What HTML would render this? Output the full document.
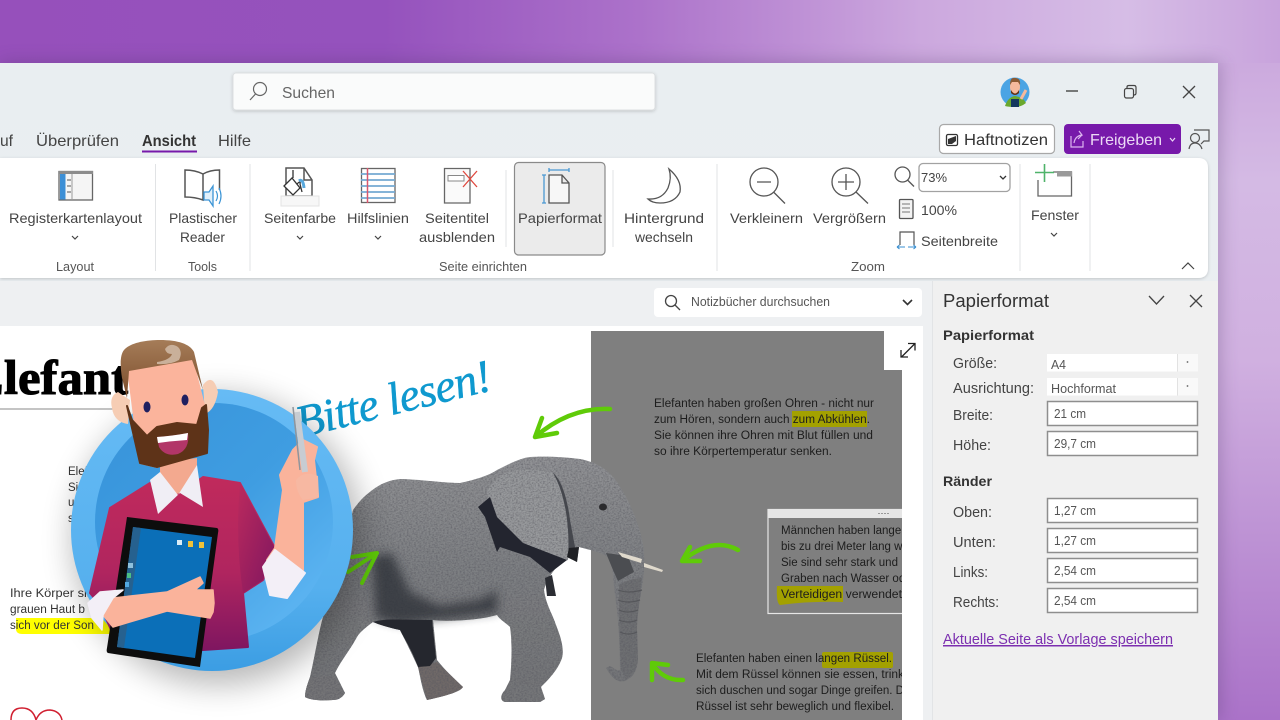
<!DOCTYPE html>
<html lang="de">
<head>
<meta charset="utf-8">
<title>OneNote Papierformat</title>
<style>
html,body{margin:0;padding:0;width:1280px;height:720px;overflow:hidden;background:#a060c0}
svg{display:block;position:absolute;left:0;top:0;overflow:hidden;filter:blur(.3px)}
text{font-family:"Liberation Sans",sans-serif;fill:#3a3a3a;white-space:pre}
.r{font-size:14px;fill:#444}
.g{font-size:12.5px;fill:#555}
.p{font-size:14.5px;fill:#444}
.f{font-size:13px;fill:#555}
.b{font-size:11.5px;fill:#333}
.d{font-size:11.5px;fill:#1d1d1d}
.ic{fill:none;stroke:#555;stroke-width:1.5}
.fld{fill:#fff;stroke:#8e8e8e;stroke-width:1.5}
.ar{fill:none;stroke:#5fcb08;stroke-width:4.5;stroke-linecap:round;stroke-linejoin:round}
</style>
</head>
<body>
<svg width="1280" height="720" viewBox="0 0 1280 720">
<defs>
<linearGradient id="bg" x1="0" y1="0" x2="1" y2="0">
<stop offset="0" stop-color="#9650bb"/><stop offset=".3" stop-color="#9552bd"/><stop offset=".5" stop-color="#ac72ca"/><stop offset=".72" stop-color="#cca8de"/><stop offset=".88" stop-color="#d6bde6"/><stop offset="1" stop-color="#c8a3dc"/>
</linearGradient>
<linearGradient id="bgr" x1="0" y1="0" x2="0" y2="1">
<stop offset="0" stop-color="#ccaade"/><stop offset=".18" stop-color="#d4bae4"/><stop offset=".45" stop-color="#d0b0e0"/><stop offset=".75" stop-color="#bb8fd3"/><stop offset="1" stop-color="#aa72c8"/>
</linearGradient>
<linearGradient id="win" x1="0" y1="0" x2="0" y2="1"><stop offset="0" stop-color="#e9eef1"/><stop offset="1" stop-color="#eceff2"/></linearGradient>
<linearGradient id="c1" x1="0" y1="0" x2="0" y2="1"><stop offset="0" stop-color="#66bbf5"/><stop offset=".7" stop-color="#56b0ee"/><stop offset="1" stop-color="#3b9de3"/></linearGradient>
<linearGradient id="c2" x1="0" y1="0" x2="1" y2="1"><stop offset="0" stop-color="#3793da"/><stop offset=".5" stop-color="#3f9de1"/><stop offset="1" stop-color="#66bcf7"/></linearGradient>
<linearGradient id="shirt" x1="0" y1="0" x2="0" y2="1"><stop offset="0" stop-color="#c02a5c"/><stop offset=".55" stop-color="#b0255f"/><stop offset="1" stop-color="#7f1660"/></linearGradient>
<linearGradient id="sleeve" x1="0" y1="0" x2="1" y2="1"><stop offset="0" stop-color="#bb2a5d"/><stop offset="1" stop-color="#7f1660"/></linearGradient>
<linearGradient id="hair" x1="0" y1="0" x2="0" y2="1"><stop offset="0" stop-color="#a57c58"/><stop offset="1" stop-color="#7a4c2a"/></linearGradient>
<linearGradient id="ele" gradientUnits="userSpaceOnUse" x1="0" y1="457" x2="0" y2="702"><stop offset="0" stop-color="#929396"/><stop offset=".45" stop-color="#7e8083"/><stop offset="1" stop-color="#737476"/></linearGradient>
<filter id="soft" x="-30%" y="-30%" width="160%" height="160%"><feGaussianBlur stdDeviation="16"/></filter>
<filter id="sm" x="-30%" y="-30%" width="160%" height="160%"><feGaussianBlur stdDeviation="5"/></filter>
<filter id="skin" x="0" y="0" width="1" height="1">
<feTurbulence type="fractalNoise" baseFrequency=".55 .7" numOctaves="2" seed="4" result="n"/>
<feColorMatrix in="n" values="0 0 0 0 0.1  0 0 0 0 0.1  0 0 0 0 0.12  1.5 0 0 0 -.55" result="d"/>
<feComposite in="d" in2="SourceAlpha" operator="in" result="t"/>
<feMerge><feMergeNode in="SourceGraphic"/><feMergeNode in="t"/></feMerge>
</filter>
<filter id="sh" x="-5%" y="-20%" width="110%" height="140%"><feDropShadow dx="0" dy="1" stdDeviation="1.5" flood-color="#000" flood-opacity=".18"/></filter>
<filter id="wsh" filterUnits="userSpaceOnUse" x="0" y="0" width="1280" height="720"><feGaussianBlur stdDeviation="9"/></filter>
<clipPath id="pg"><rect x="0" y="326" width="902" height="394"/></clipPath>
<clipPath id="all"><rect x="0" y="0" width="1280" height="720"/></clipPath>
</defs>

<!-- backdrop -->
<rect width="1280" height="720" fill="url(#bg)"/>
<rect x="1218" y="63" width="62" height="657" fill="url(#bgr)"/>
<rect x="0" y="62" width="1220" height="658" fill="#4a3060" opacity=".3" filter="url(#wsh)"/>

<!-- window -->
<rect x="0" y="63" width="1218" height="657" fill="url(#win)"/>

<!-- search -->
<rect x="233" y="73" width="422" height="37" rx="3" fill="#fafbfb" stroke="#dcdfe1" filter="url(#sh)"/>
<circle cx="260" cy="89" r="6.5" fill="none" stroke="#666" stroke-width="1.200"/>
<path d="M255.5 94 L250 100" fill="none" stroke="#666" stroke-width="1.200"/>
<text x="282" y="98" style="font-size:16px;fill:#666" textLength="53" lengthAdjust="spacingAndGlyphs">Suchen</text>

<!-- avatar + window controls -->
<circle cx="1015" cy="92" r="14.5" fill="#4ba4e4"/>
<path d="M1005 106 Q1008 97 1015 96 Q1023 97 1026 103 Q1021 107 1015 107 Q1009 107 1005 106Z" fill="#6aa82e"/>
<rect x="1011" y="99" width="8" height="8" fill="#14375e"/>
<ellipse cx="1015" cy="87" rx="5" ry="7" fill="#f5b99c"/>
<path d="M1010 85 Q1010 77 1015 78 Q1021 78 1020 85 L1018 82 L1012 82Z" fill="#8b5a33"/>
<path d="M1011 90 Q1015 97 1019 90 L1019 93 Q1015 97 1011 93Z" fill="#5e3218"/>
<path d="M1021 99 L1026 90" stroke="#f5b99c" stroke-width="3"/>
<path d="M1066 91 H1078" stroke="#444" stroke-width="1.4"/>
<rect x="1124.5" y="88.5" width="9" height="9.5" rx="2" fill="none" stroke="#444" stroke-width="1.2"/>
<path d="M1127 88 V87 Q1127 85.5 1129 85.5 H1134 Q1136 85.5 1136 87.5 V93 Q1136 95 1134 95" fill="none" stroke="#444" stroke-width="1.2"/>
<path d="M1183 86 L1195 98 M1195 86 L1183 98" stroke="#444" stroke-width="1.3"/>

<!-- tabs -->
<text x="0" y="146" style="font-size:16px;fill:#444" textLength="13" lengthAdjust="spacingAndGlyphs">uf</text>
<text x="36" y="146" style="font-size:16px;fill:#444" textLength="83" lengthAdjust="spacingAndGlyphs">Überprüfen</text>
<text x="142" y="146" style="font-size:16px;fill:#333;font-weight:bold" textLength="54" lengthAdjust="spacingAndGlyphs">Ansicht</text>
<rect x="142" y="150.5" width="55" height="2" fill="#7719aa"/>
<text x="218" y="146" style="font-size:16px;fill:#444" textLength="33" lengthAdjust="spacingAndGlyphs">Hilfe</text>

<!-- top right buttons -->
<rect x="939.5" y="124.5" width="115" height="29" rx="4" fill="#fff" stroke="#a8a8a8" stroke-width="1.2"/>
<rect x="946.5" y="134.5" width="11" height="11" rx="1.5" fill="#fff" stroke="#333" stroke-width="1.3"/>
<path d="M948 144 V139 L956 136 V141 L952 144Z" fill="#333"/>
<text x="964" y="145" style="font-size:16px;fill:#333" textLength="84" lengthAdjust="spacingAndGlyphs">Haftnotizen</text>
<rect x="1064" y="124" width="117" height="30" rx="4" fill="#7719aa"/>
<path d="M1071 136 V147 H1083 V141 M1074 143 Q1075 136 1082 135 L1079 131 M1082 135 L1078 139" fill="none" stroke="#dcb5ef" stroke-width="1.2"/>
<text x="1090" y="145" style="font-size:16px;fill:#ecd9f5" textLength="72" lengthAdjust="spacingAndGlyphs">Freigeben</text>
<path d="M1170 138 L1172.5 141 L1175 138" fill="none" stroke="#ecd9f5" stroke-width="1.2"/>
<circle cx="1195" cy="138" r="4.5" fill="none" stroke="#555" stroke-width="1.2"/>
<path d="M1189 149 Q1190 143 1195 143 Q1200 143 1202 149" fill="none" stroke="#555" stroke-width="1.2"/>
<path d="M1194 130 H1209 V141 H1204 L1201 144" fill="none" stroke="#555" stroke-width="1.2"/>

<!-- ribbon -->
<path d="M0 158 H1198 Q1208 158 1208 168 V268 Q1208 278 1198 278 H0Z" fill="#fff" filter="url(#sh)"/>
<g stroke="#e1e3e5" stroke-width="1">
<path d="M155.5 164 V271 M250 164 V271 M717 164 V271 M1020 164 V271 M1090 164 V271 M613 170 V247 M506 170 V247"/>
</g>

<!-- Registerkartenlayout -->
<rect x="59" y="171.5" width="33.500" height="28.500" fill="#f5f5f5" stroke="#666" stroke-width="1.300"/>
<rect x="59" y="171" width="34" height="3" fill="#8c8c8c"/>
<rect x="60" y="174" width="5.500" height="25.500" fill="#3c8fd6"/>
<path d="M72 174 V200" stroke="#9a9a9a"/>
<path d="M67 180 H71 M67 186 H71 M67 192 H71" stroke="#777" stroke-width="1.200"/>
<text x="9" y="223" class="r" textLength="133" lengthAdjust="spacingAndGlyphs">Registerkartenlayout</text>
<path d="M72 236 L75 239 L78 236" fill="none" stroke="#444" stroke-width="1.200"/>
<text x="56" y="271" class="g" textLength="38" lengthAdjust="spacingAndGlyphs">Layout</text>

<!-- Plastischer Reader -->
<path d="M203 174 Q195 170 185 170 V197 Q195 197 203 200 V174 Q210 170 219.500 170 V190" class="ic" style="stroke:#555;fill:none"/>
<path d="M204 192 H209 L213 186 V206 L209 200 H204Z" fill="#e2f0fa" stroke="#3c95d6" stroke-width="1.300"/>
<path d="M216 191 Q219 196 216 201 M219 188 Q223 196 219 204" fill="none" stroke="#3c95d6" stroke-width="1.200"/>
<text x="169" y="223" class="r" textLength="68" lengthAdjust="spacingAndGlyphs">Plastischer</text>
<text x="180" y="242" class="r" textLength="45" lengthAdjust="spacingAndGlyphs">Reader</text>
<text x="188" y="271" class="g" textLength="29" lengthAdjust="spacingAndGlyphs">Tools</text>

<!-- Seitenfarbe -->
<path d="M286 168 H304 L312 180 V196 H286Z M304 168 V180 H312" class="ic"/>
<rect x="281" y="196" width="38" height="10" fill="#f7f7f7" stroke="#e3e3e3"/>
<path d="M284 186 L292 178 L300 188 L293 195 Z" fill="#fff" stroke="#333" stroke-width="1.300"/>
<path d="M293 178 V170 M297 184 Q301 180 300 184 L302 192" fill="none" stroke="#333" stroke-width="1.300"/>
<path d="M299 181 Q303 178 304 188" fill="none" stroke="#58a8dc" stroke-width="3"/>
<text x="264" y="223" class="r" textLength="72" lengthAdjust="spacingAndGlyphs">Seitenfarbe</text>
<path d="M297 236 L300 239 L303 236" fill="none" stroke="#444" stroke-width="1.200"/>

<!-- Hilfslinien -->
<rect x="361.500" y="168.500" width="33.500" height="34" fill="#fff" stroke="#666" stroke-width="1.300"/>
<path d="M361 174 H395 M361 180 H395 M361 186 H395 M361 192 H395 M361 198 H395" stroke="#74a9d3" stroke-width="1.800"/>
<path d="M367.500 168 V203" stroke="#d8576d" stroke-width="1.500"/>
<text x="347" y="223" class="r" textLength="62" lengthAdjust="spacingAndGlyphs">Hilfslinien</text>
<path d="M375 236 L378 239 L381 236" fill="none" stroke="#444" stroke-width="1.200"/>

<!-- Seitentitel -->
<path d="M444.500 168.500 H470 V203 H444.500Z" fill="#fafafa" stroke="#666" stroke-width="1.300"/>
<rect x="448" y="175.500" width="16" height="5.500" fill="#fff" stroke="#888"/>
<path d="M463 171 L477 187 M477 171 L463 187" stroke="#e0483e" stroke-width="1.300"/>
<text x="425" y="223" class="r" textLength="64" lengthAdjust="spacingAndGlyphs">Seitentitel</text>
<text x="419" y="242" class="r" textLength="76" lengthAdjust="spacingAndGlyphs">ausblenden</text>
<text x="439" y="271" class="g" textLength="88" lengthAdjust="spacingAndGlyphs">Seite einrichten</text>

<!-- Papierformat button -->
<rect x="514.500" y="162.500" width="90.500" height="92.500" rx="4" fill="#ebebeb" stroke="#8a8a8a" stroke-width="1.200"/>
<path d="M549 175 H562 L569 183 V203 H549Z M562 175 V183 H569" fill="#f7f7f7" stroke="#555" stroke-width="1.300"/>
<path d="M549 170 H569 M549 168 V172 M569 168 V172 M544 175 V203 M542 175 H546 M542 203 H546" stroke="#4a98d2" stroke-width="1.300" fill="none"/>
<text x="518" y="223" class="r" textLength="84" lengthAdjust="spacingAndGlyphs">Papierformat</text>

<!-- Moon -->
<path d="M669 169 Q682 180 680 192 Q675 203 660 203 Q652 203 648 199 Q662 200 668 188 Q672 178 669 169Z" fill="#fff" stroke="#555" stroke-width="1.300"/>
<text x="624" y="223" class="r" textLength="80" lengthAdjust="spacingAndGlyphs">Hintergrund</text>
<text x="635" y="242" class="r" textLength="58" lengthAdjust="spacingAndGlyphs">wechseln</text>

<!-- Zoom -->
<circle cx="764" cy="182" r="14" fill="none" stroke="#555" stroke-width="1.300"/>
<path d="M757 182 H771 M773.500 192 L785 203.500" fill="none" stroke="#555" stroke-width="1.300"/>
<text x="730" y="223" class="r" textLength="73" lengthAdjust="spacingAndGlyphs">Verkleinern</text>
<circle cx="846" cy="182" r="14" fill="none" stroke="#555" stroke-width="1.300"/>
<path d="M838 182 H854 M846 174 V190 M856 192 L868 203.500" fill="none" stroke="#555" stroke-width="1.300"/>
<text x="813" y="223" class="r" textLength="73" lengthAdjust="spacingAndGlyphs">Vergrößern</text>
<circle cx="902.500" cy="174.500" r="7.500" fill="none" stroke="#555" stroke-width="1.300"/>
<path d="M907.500 180 L914 186.500" fill="none" stroke="#555" stroke-width="1.300"/>
<rect x="919" y="163.500" width="91" height="28" rx="4" fill="#fff" stroke="#a2a2a2" stroke-width="1.300"/>
<text x="921" y="182" style="font-size:13px;fill:#444" textLength="26" lengthAdjust="spacingAndGlyphs">73%</text>
<path d="M1000 176 L1003 179 L1006 176" fill="none" stroke="#333" stroke-width="1.300"/>
<rect x="899.500" y="199.500" width="13.500" height="19" rx="1" fill="#f3f3f3" stroke="#555" stroke-width="1.300"/>
<path d="M902 204 H910 M902 208 H910 M902 212 H910" stroke="#777"/>
<text x="921" y="215" class="r" textLength="36" lengthAdjust="spacingAndGlyphs">100%</text>
<path d="M900 245 V232 H914 V245" fill="none" stroke="#555" stroke-width="1.200"/>
<path d="M897 247 H905 M897 247 L899.500 245 M897 247 L899.500 249 M908 247 H916 M916 247 L913.500 245 M916 247 L913.500 249" stroke="#3a8fd0" stroke-width="1.100" fill="none"/>
<text x="921" y="246" class="r" textLength="77" lengthAdjust="spacingAndGlyphs">Seitenbreite</text>
<text x="851" y="271" class="g" textLength="34" lengthAdjust="spacingAndGlyphs">Zoom</text>

<!-- Fenster -->
<path d="M1038 172 H1071.500 V196 H1038Z" fill="#fff" stroke="#666" stroke-width="1.300"/>
<rect x="1057" y="171" width="15" height="5.500" fill="#9a9a9a"/>
<rect x="1036" y="164" width="17" height="16" fill="#fff"/>
<path d="M1044.500 164 V182 M1035 172.500 H1054" stroke="#4fb36a" stroke-width="1.600"/>
<text x="1031" y="220" class="r" textLength="48" lengthAdjust="spacingAndGlyphs">Fenster</text>
<path d="M1051 233 L1054 236 L1057 233" fill="none" stroke="#444" stroke-width="1.200"/>
<path d="M1182 269 L1188 263 L1194 269" fill="none" stroke="#444" stroke-width="1.200"/>

<!-- middle bar -->
<rect x="0" y="281" width="932" height="45" fill="#eef0f2"/>
<rect x="654" y="288" width="268" height="29" rx="4" fill="#fff"/>
<circle cx="671" cy="301" r="5.500" fill="none" stroke="#444" stroke-width="1.300"/>
<path d="M675 305 L680 310" stroke="#444" stroke-width="1.300"/>
<text x="691" y="306" style="font-size:13px;fill:#555" textLength="139" lengthAdjust="spacingAndGlyphs">Notizbücher durchsuchen</text>
<path d="M903 300 L907.500 304.500 L912 300" fill="none" stroke="#333" stroke-width="1.600"/>

<!-- page -->
<rect x="0" y="326" width="923" height="394" fill="#fff"/>
<rect x="923" y="326" width="9" height="394" fill="#eef0f2"/>

<g clip-path="url(#pg)">
<rect x="591" y="331" width="311" height="389" fill="#7f7f7f"/>
<text x="-30" y="394" style="font-family:'Liberation Serif',serif;font-weight:bold;font-size:49px;fill:#000;stroke:#000;stroke-width:1" textLength="158" lengthAdjust="spacingAndGlyphs">Elefant</text>
<rect x="0" y="408.500" width="115" height="1" fill="#888"/>
<text x="68" y="475" class="b">Elef</text>
<text x="68" y="491" class="b">Sie</text>
<text x="68" y="506" class="b">u</text>
<text x="68" y="522" class="b">s</text>
<path d="M16 618 H112 V634 H22 Q17 634 16 630Z" fill="#ffff00"/>
<text x="10" y="597" class="b" textLength="84" lengthAdjust="spacingAndGlyphs">Ihre Körper sin</text>
<text x="10" y="613" class="b" textLength="75" lengthAdjust="spacingAndGlyphs">grauen Haut b</text>
<text x="10" y="629" class="b" textLength="84" lengthAdjust="spacingAndGlyphs">sich vor der Son</text>
<path d="M11 720 Q11 708 22 708 Q33 708 36 720 M36 720 Q40 710 50 710 Q60 711 62 720" fill="none" stroke="#d01f30" stroke-width="1.500"/>

<!-- gray text -->
<rect x="792" y="411" width="75" height="16" fill="#a3a100"/>
<rect x="822" y="652" width="71" height="16" rx="2" fill="#a3a100"/>
<text x="654" y="407" class="d" textLength="220" lengthAdjust="spacingAndGlyphs">Elefanten haben großen Ohren - nicht nur</text>
<text x="654" y="423" class="d" textLength="216" lengthAdjust="spacingAndGlyphs">zum Hören, sondern auch zum Abkühlen.</text>
<text x="654" y="439" class="d" textLength="219" lengthAdjust="spacingAndGlyphs">Sie können ihre Ohren mit Blut füllen und</text>
<text x="654" y="455" class="d" textLength="178" lengthAdjust="spacingAndGlyphs">so ihre Körpertemperatur senken.</text>

<rect x="768" y="509.500" width="140" height="104" fill="none" stroke="#e6e6e6" stroke-width="1.200"/>
<rect x="768" y="510" width="140" height="8" fill="#e6e6e6"/>
<path d="M878 513.500 H890" stroke="#999" stroke-dasharray="2 1"/>
<path d="M777 586 H843 V602 Q810 601 780 605 Q776 603 777 586Z" fill="#a3a100"/>
<text x="781" y="534" class="d">Männchen haben lange</text>
<text x="781" y="550" class="d">bis zu drei Meter lang w</text>
<text x="781" y="566" class="d">Sie sind sehr stark und</text>
<text x="781" y="582" class="d">Graben nach Wasser od</text>
<text x="781" y="598" class="d" textLength="121" lengthAdjust="spacingAndGlyphs">Verteidigen verwendet</text>
<text x="696" y="662" class="d" textLength="196" lengthAdjust="spacingAndGlyphs">Elefanten haben einen langen Rüssel.</text>
<text x="696" y="678" class="d" textLength="208" lengthAdjust="spacingAndGlyphs">Mit dem Rüssel können sie essen, trink</text>
<text x="696" y="694" class="d" textLength="208" lengthAdjust="spacingAndGlyphs">sich duschen und sogar Dinge greifen. D</text>
<text x="696" y="710" class="d" textLength="198" lengthAdjust="spacingAndGlyphs">Rüssel ist sehr beweglich und flexibel.</text>

<!-- elephant -->
<g filter="url(#skin)">
<path d="M530 457 C545 456 565 457 580 459 C600 463 612 472 622 490 C630 503 637 520 641 535 C645 550 645 565 643 580 C640 600 637 615 637 630 L638 660 C637 672 632 678 625 681 C617 683 612 678 606 668 L610 666 C614 668 618 672 620 670 C620 650 619 630 617 610 C615 595 613 580 612 560 C605 553 590 550 579 547 L577 562 L567 557 C558 565 548 575 544 590 C546 605 553 615 556 625 C562 640 564 650 562 658 C558 670 548 680 541 687 L545 699 L540 702 L505 702 C500 701 500 695 505 690 L510 680 C512 660 512 640 510 627 C505 622 500 620 497 615 C480 620 450 622 433 620 L437 660 C445 670 455 680 463 687 C460 692 445 696 427 700 C422 690 420 675 418 667 C410 650 405 640 400 630 C390 628 380 625 373 622 C365 628 360 632 357 637 C350 650 340 662 335 673 L345 693 C342 698 338 700 333 700 C320 701 310 700 305 697 C305 690 308 683 310 677 C315 655 318 635 323 617 C330 600 345 570 351 550 C350 535 350 522 353 510 C360 500 368 492 380 485 C390 480 397 479 403 479 C425 480 445 483 460 483 C475 480 490 475 497 470 C507 465 520 458 530 457Z" fill="url(#ele)"/>
<path d="M487 492 C492 482 500 475 507 472 C525 468 540 470 553 473 C562 482 566 495 567 507 C570 525 570 545 568 560 C560 562 558 558 553 558 C540 552 530 547 520 540 C510 533 503 527 497 520 C493 512 488 500 487 492Z" fill="#989a9c"/>
<path d="M619 585 C627 580 636 578 642 578 C640 600 637 615 637 630 L638 660 C637 668 632 676 626 679 L621 670 C620 650 619 625 619 585Z" fill="#6e6f72"/>
<path d="M305 697 C305 690 308 683 310 677 L333 676 L345 693 C342 698 338 700 333 700 C320 701 310 700 305 697Z" fill="#747577"/>
<path d="M505 690 L512 682 L540 686 L545 699 L540 702 L505 702Z" fill="#767779"/>
<path d="M418 667 L437 662 L463 687 C460 692 445 696 427 700Z" fill="#6f6968"/>
</g>
<path d="M376 618 L372 556 L392 553 L410 592 L440 606 L480 600 L497 590 L497 612 L450 618 L430 620 L400 624Z" fill="#2c2e36" opacity=".75" filter="url(#sm)"/>
<path d="M373 622 C385 618 400 620 432 620 L436 658 L430 666 L418 667 C412 650 405 640 400 630 C390 628 380 625 373 622Z" fill="#25272e"/>
<path d="M478 507 L490 497 L497 517 L523 543 L567 560 L550 573 L530 557 L500 547 L497 552 L485 517Z" fill="#23252f"/>
<path d="M553 473 C560 478 567 495 570 520 L575 547 L568 558 C570 530 566 495 553 473Z" fill="#45474d"/>
<path d="M579 547 L577 562 L567 557 L569 548Z" fill="#1f2024"/>
<path d="M606 553 L628 556 L634 572 L618 581 L613 570Z" fill="#4b4d51"/>
<path d="M545 578 L552 575 L556 596 L547 596Z" fill="#2b2d33"/>
<path d="M618 552 L642 559 L641 563 L622 557Z M644 563 L663 570 L662 572 L644 567Z" fill="#dfd9cc"/>
<ellipse cx="603" cy="507" rx="4" ry="3.500" fill="#2b2b2d"/>
<path d="M618 590 Q628 594 642 590 M618 600 Q628 604 640 600 M619 610 Q628 614 638 610 M619 620 Q628 624 637 620 M620 632 Q628 636 637 632" fill="none" stroke="#55565a" stroke-width="1.200"/>

<!-- arrows -->
<path d="M610 409 Q570 407 535 437 M542 418 L535 437 L557 433" class="ar"/>
<path d="M738 550 Q713 536 682 561 M690 547 L682 561 L700 561" class="ar"/>
<path d="M683 680 Q663 681 652 663 M652 680 L652 663 L668 665" class="ar"/>
<path d="M348 572 L377 553 M352 557 L377 553 L362 583" class="ar" style="stroke-width:4"/>
</g>

<!-- expand -->
<rect x="884" y="331" width="39" height="39" fill="#fff"/>
<path d="M901.500 357 L915 343.500 M908 343.500 H915 V350.500 M901 350 V357 H908" fill="none" stroke="#222" stroke-width="1.300"/>

<!-- handwriting -->
<text transform="translate(300 438) rotate(-14)" style="font-family:'Liberation Serif',serif;font-style:italic;font-size:46px;fill:#0f99cf;stroke:#0f99cf;stroke-width:.5" textLength="200" lengthAdjust="spacing">Bitte lesen!</text>

<!-- character -->
<g clip-path="url(#all)">
<circle cx="218" cy="540" r="145" fill="#000" opacity=".28" filter="url(#soft)"/>
</g>
<circle cx="212" cy="530" r="141" fill="url(#c1)"/>
<circle cx="214" cy="522" r="119" fill="url(#c2)"/>
<path d="M118 392 Q109 396 112 408 Q114 422 128 424 L130 400Z" fill="#f6cdb4"/>
<path d="M203 385 Q213 372 218 392 Q215 410 205 414Z" fill="#f6cdb4"/>
<path d="M160 462 L197 458 L197 480 L178 495 L160 478Z" fill="#f3a98f"/>
<!-- shirt -->
<path d="M150 483 L110 508 L90 593 L100 605 L120 650 L203 650 L248 647 L243 593 L263 580 L275 548 L240 483 L203 477 L178 495Z" fill="url(#shirt)" stroke="url(#shirt)" stroke-width="2" stroke-linejoin="round"/>
<path d="M240 483 L275 548 L263 580 L243 593 Q235 540 240 483Z" fill="url(#sleeve)"/>
<path d="M150 480 L160 472 L178 495 L197 465 L203 507 L180 493 L158 514Z" fill="#f0eef5"/>
<!-- face -->
<path d="M128 369 L192 358 L207 417 L207 452 L157 467 L140 463Z" fill="#fbb49c" stroke="#fbb49c" stroke-width="2" stroke-linejoin="round"/>
<path d="M127 406 L132 420 L147 436 L157 427 L177 423 L197 425 L202 408 L206 405 L208 430 L207 453 L157 467 L140 463Z" fill="#5e3318" stroke="#5e3318" stroke-width="2" stroke-linejoin="round"/>
<path d="M122 378 C120 365 120 355 124 350 C130 343 145 340 160 340 C178 340 190 344 194 352 L203 390 L192 360 L129 371 L127 398Z" fill="url(#hair)"/>
<path d="M157 362 Q170 360 172 354 Q166 354 165 349 Q170 342 178 347 Q183 352 179 360 Q170 365 157 364Z" fill="#c9b09a"/>
<ellipse cx="147" cy="407" rx="3.500" ry="5.500" fill="#1f1f60"/>
<ellipse cx="185" cy="400" rx="3.500" ry="5.500" fill="#1f1f60"/>
<path d="M157 437 Q172 436 188 433 Q190 449 178 454 Q165 457 159 447Z" fill="#b23668"/>
<path d="M157 437 Q172 436 188 433 L187 440 Q172 441 158 443Z" fill="#fff"/>
<!-- right arm -->
<path d="M267 560 L275 548 L283 490 L280 475 L293 450 L303 440 L317 447 L314 460 L318 497 L303 502 L303 570 Z" fill="#fab39b" stroke="#fab39b" stroke-width="2" stroke-linejoin="round"/>
<path d="M297 412 L305 472" stroke="#c7ccd2" stroke-width="6"/>
<path d="M293 407 L300 470" stroke="#8f959c" stroke-width="1.500" fill="none"/>
<path d="M296 480 Q304 470 318 476 L319 497 L303 500 Q296 492 296 480Z" fill="#f7b8a2"/>
<path d="M275 550 L263 567 L270 595 L287 598 L305 573Z" fill="#f3eff7" stroke="#f3eff7" stroke-width="2" stroke-linejoin="round"/>
<!-- tablet -->
<path d="M127 517 L217 528 Q219 529 218 533 L200 667 L108 653 Q106 652 107 648 Z" fill="#0d0d0d"/>
<path d="M133 527 L212 537 L195 658 L117 647Z" fill="#0b6fb8"/>
<path d="M133 527 L141 528 L124 648 L117 647Z" fill="#26618f"/>
<rect x="177" y="540" width="5" height="5" fill="#d9ecf7"/>
<rect x="188" y="541" width="5" height="6" fill="#f0c23a"/>
<rect x="199" y="542" width="5" height="6" fill="#f0c23a"/>
<rect x="128" y="563" width="5" height="5" fill="#8ec0dd"/>
<rect x="127" y="573" width="4" height="5" fill="#4bbf85"/>
<rect x="125" y="582" width="4" height="5" fill="#52a8e0"/>
<!-- left arm -->
<path d="M103 615 L113 598 L167 592 L200 577 L203 583 L195 590 L213 590 L214 603 L213 612 L210 618 L167 611 L113 627Z" fill="#fab39b" stroke="#fab39b" stroke-width="1.500" stroke-linejoin="round"/>
<path d="M88 603 L100 592 L123 590 L113 598 L103 615 L102 630 L92 618Z" fill="#f3eff7" stroke="#f3eff7" stroke-width="1.500" stroke-linejoin="round"/>
</svg>

<!-- side panel drawn as second layer -->
<svg width="1280" height="720" viewBox="0 0 1280 720">
<rect x="932" y="281" width="286" height="439" fill="#f0f0f0"/>
<rect x="932" y="281" width="1" height="439" fill="#e2e4e6"/>
<text x="943" y="307" style="font-size:18px;fill:#333" textLength="106" lengthAdjust="spacingAndGlyphs">Papierformat</text>
<path d="M1149 296 L1156.500 304 L1164 296" fill="none" stroke="#444" stroke-width="1.300"/>
<path d="M1190 295 L1202 307 M1202 295 L1190 307" stroke="#444" stroke-width="1.300"/>
<text x="943" y="340" style="font-size:14px;font-weight:bold;fill:#333" textLength="91" lengthAdjust="spacingAndGlyphs">Papierformat</text>
<text x="953" y="368" class="p" textLength="44" lengthAdjust="spacingAndGlyphs">Größe:</text>
<text x="953" y="393" class="p" textLength="81" lengthAdjust="spacingAndGlyphs">Ausrichtung:</text>
<text x="953" y="420" class="p" textLength="40" lengthAdjust="spacingAndGlyphs">Breite:</text>
<text x="953" y="450" class="p" textLength="38" lengthAdjust="spacingAndGlyphs">Höhe:</text>
<text x="943" y="486" style="font-size:14px;font-weight:bold;fill:#333" textLength="49" lengthAdjust="spacingAndGlyphs">Ränder</text>
<text x="953" y="517" class="p" textLength="39" lengthAdjust="spacingAndGlyphs">Oben:</text>
<text x="953" y="547" class="p" textLength="43" lengthAdjust="spacingAndGlyphs">Unten:</text>
<text x="953" y="577" class="p" textLength="35" lengthAdjust="spacingAndGlyphs">Links:</text>
<text x="953" y="607" class="p" textLength="46" lengthAdjust="spacingAndGlyphs">Rechts:</text>

<rect x="1047" y="354" width="151" height="17.500" fill="#fff"/>
<rect x="1178" y="354" width="20" height="17.500" fill="#f9f9f9"/>
<path d="M1177.500 354 V371.500" stroke="#e2e2e2"/>
<circle cx="1187.500" cy="362" r=".9" fill="#666"/>
<text x="1051" y="369" style="font-size:12.500px;fill:#555" textLength="15" lengthAdjust="spacingAndGlyphs">A4</text>
<rect x="1047" y="378" width="151" height="17.500" fill="#fff"/>
<rect x="1178" y="378" width="20" height="17.500" fill="#f9f9f9"/>
<path d="M1177.500 378 V395.500" stroke="#e2e2e2"/>
<circle cx="1187.500" cy="386" r=".9" fill="#666"/>
<text x="1051" y="393" style="font-size:12.500px;fill:#555" textLength="65" lengthAdjust="spacingAndGlyphs">Hochformat</text>

<rect class="fld" x="1047.500" y="401.500" width="150" height="24"/>
<text x="1054" y="418" class="f" textLength="32" lengthAdjust="spacingAndGlyphs">21 cm</text>
<rect class="fld" x="1047.500" y="431.500" width="150" height="24"/>
<text x="1054" y="448" class="f" textLength="42" lengthAdjust="spacingAndGlyphs">29,7 cm</text>
<rect class="fld" x="1047.500" y="498.500" width="150" height="24"/>
<text x="1054" y="515" class="f" textLength="42" lengthAdjust="spacingAndGlyphs">1,27 cm</text>
<rect class="fld" x="1047.500" y="528.500" width="150" height="24"/>
<text x="1054" y="545" class="f" textLength="42" lengthAdjust="spacingAndGlyphs">1,27 cm</text>
<rect class="fld" x="1047.500" y="558.500" width="150" height="24"/>
<text x="1054" y="575" class="f" textLength="42" lengthAdjust="spacingAndGlyphs">2,54 cm</text>
<rect class="fld" x="1047.500" y="588.500" width="150" height="24"/>
<text x="1054" y="605" class="f" textLength="42" lengthAdjust="spacingAndGlyphs">2,54 cm</text>
<text x="943" y="644" style="font-size:15px;fill:#7c2fb0;text-decoration:underline" textLength="230" lengthAdjust="spacingAndGlyphs">Aktuelle Seite als Vorlage speichern</text>
</svg>
</body>
</html>
